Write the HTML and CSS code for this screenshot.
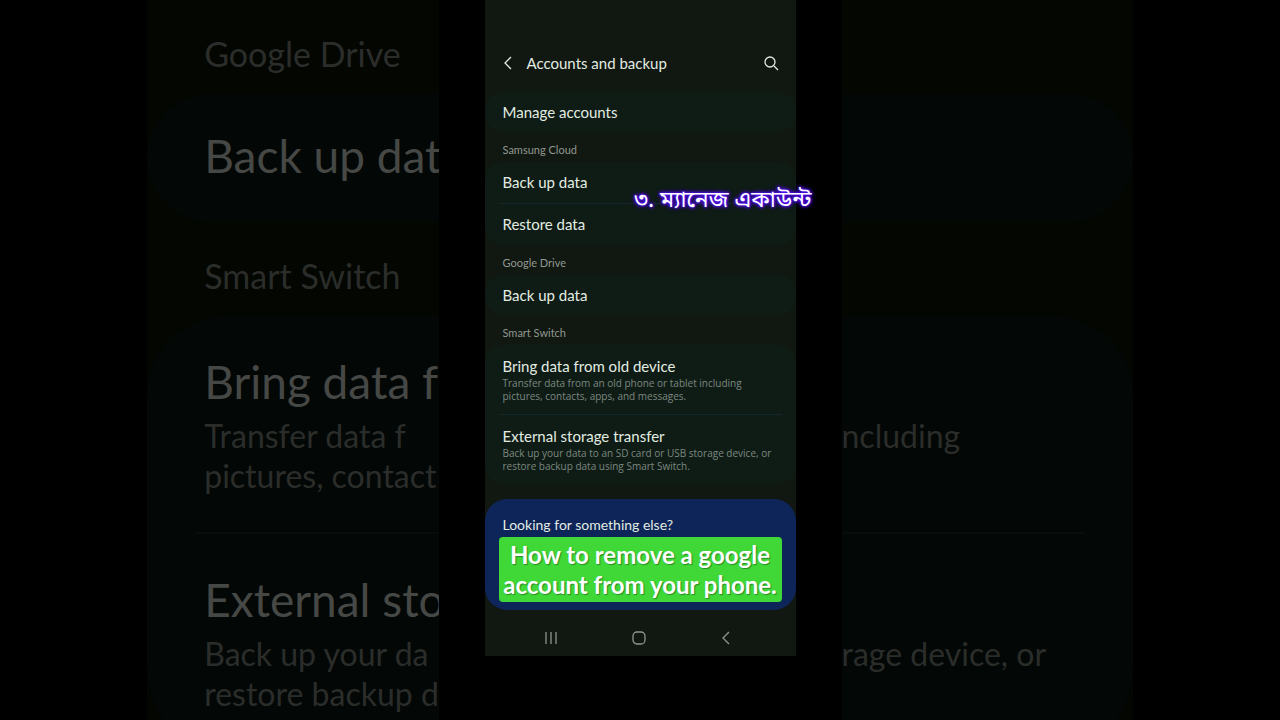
FILE: index.html
```html
<!DOCTYPE html>
<html lang="en">
<head>
    <meta charset="UTF-8">
    <meta name="viewport" content="width=device-width, initial-scale=1.0">
    <title>Accounts and backup</title>
    <link rel="stylesheet" href="styles.css">
</head>
<body>
    <div class="screen">
        <!-- enlarged, dimmed list on the left of the phone -->
        <div class="side side-left" aria-hidden="true">
            <div class="side-label">Google Drive</div>
            <div class="side-card">
                <div class="side-row side-single"><div class="side-title">Back up dat</div></div>
            </div>
            <div class="side-label">Smart Switch</div>
            <div class="side-card">
                <div class="side-row">
                    <div class="side-title">Bring data f</div>
                    <div class="side-desc">Transfer data f<br>pictures, contact</div>
                </div>
                <div class="side-row">
                    <div class="side-title">External sto</div>
                    <div class="side-desc">Back up your da<br>restore backup d</div>
                </div>
            </div>
        </div>

        <div class="stage">
            <main class="phone">
                <header class="header">
                    <button type="button" class="icon-button" aria-label="Back">
                        <svg width="10" height="16" viewBox="0 0 10 16"><path d="M8 2 2 8l6 6"/></svg>
                    </button>
                    <h1>Accounts and backup</h1>
                    <button type="button" class="icon-button" aria-label="Search">
                        <svg width="16" height="16" viewBox="0 0 16 16"><circle cx="7" cy="7" r="5"/><path d="m11 11 4 4"/></svg>
                    </button>
                </header>

                <section class="card">
                    <a class="row" href="#">Manage accounts</a>
                </section>

                <h2>Samsung Cloud</h2>
                <section class="card">
                    <a class="row row-tall" href="#">Back up data</a>
                    <a class="row row-tall" href="#">Restore data</a>
                </section>

                <h2>Google Drive</h2>
                <section class="card">
                    <a class="row" href="#">Back up data</a>
                </section>

                <h2>Smart Switch</h2>
                <section class="card">
                    <a class="row row-detail" href="#">
                        Bring data from old device
                        <span class="desc">Transfer data from an old phone or tablet including<br>pictures, contacts, apps, and messages.</span>
                    </a>
                    <a class="row row-detail" href="#">
                        External storage transfer
                        <span class="desc">Back up your data to an SD card or USB storage device, or<br>restore backup data using Smart Switch.</span>
                    </a>
                </section>

                <section class="suggest">
                    <h3>Looking for something else?</h3>
                    <p class="caption">How to remove a google<br>account from your phone.</p>
                </section>

                <nav class="navbar">
                    <button type="button" class="icon-button" aria-label="Recent apps">
                        <svg width="16" height="16" viewBox="0 0 16 16"><path d="M2 2v12M7 2v12M12 2v12"/></svg>
                    </button>
                    <button type="button" class="icon-button" aria-label="Home">
                        <svg width="16" height="16" viewBox="0 0 16 16"><rect x="1" y="2" width="12" height="12" rx="4"/></svg>
                    </button>
                    <button type="button" class="icon-button" aria-label="Back">
                        <svg width="16" height="16" viewBox="0 0 16 16"><path d="M9 2 3 8l6 6"/></svg>
                    </button>
                </nav>

                <p class="step" lang="bn">৩. ম্যানেজ একাউন্ট</p>
            </main>
        </div>

        <!-- right end of the same list -->
        <div class="side side-right" aria-hidden="true">
            <div class="side-label"></div>
            <div class="side-card">
                <div class="side-row side-single"><div class="side-title"></div></div>
            </div>
            <div class="side-label"></div>
            <div class="side-card">
                <div class="side-row">
                    <div class="side-title"></div>
                    <div class="side-desc">ncluding</div>
                </div>
                <div class="side-row">
                    <div class="side-title"></div>
                    <div class="side-desc">rage device, or</div>
                </div>
            </div>
        </div>
    </div>
</body>
</html>
```
FILE: styles.css
```css
* {
    box-sizing: border-box;
}
body {
    margin: 0;
    background-color: #000;
    font-family: Lato, "Noto Sans", sans-serif;
}
h1, h2, h3, p {
    margin: 0;
    font-weight: 400;
}
.screen {
    display: grid;
    grid-template-columns: 1fr 403px 1fr;
    width: 77%;
    height: 100vh;
    margin: 0 auto;
}

/* list on both sides */
.side {
    height: 100vh;
    overflow: hidden;
    background-color: #040602;
    color: #2b2d2a;
    white-space: nowrap;
}
.side-label {
    height: 94px;
    padding: 16px 57px 0;
    font-size: 34px;
    line-height: 76px;
}
.side-card {
    background-color: #030706;
}
.side-left .side-card {
    border-radius: 80px 0 0 80px;
}
.side-right .side-card {
    border-radius: 0 80px 80px 0;
}
.side-left .side-row {
    margin-left: 48px;
    padding-left: 9px;
}
.side-right .side-row {
    margin-right: 48px;
}
.side-row {
    padding-top: 34px;
    padding-bottom: 36px;
}
.side-row + .side-row {
    border-top: 2px solid #080c0d;
}
.side-single {
    padding-top: 30px;
    padding-bottom: 32px;
}
.side-title {
    height: 66px;
    font-size: 46px;
    line-height: 64px;
    color: #464845;
}
.side-desc {
    height: 80px;
    font-size: 32px;
    line-height: 40px;
}

/* phone */
.stage {
    height: 100vh;
    padding: 0 46px;
    z-index: 1;
}
.phone {
    position: relative;
    background-color: #111711;
    color: #e2ece2;
    white-space: nowrap;
}
.header {
    display: flex;
    align-items: center;
    gap: 14px;
    padding: 42px 17px 8px 18px;
    height: 92px;
}
.header h1 {
    flex: 1;
    font-size: 15px;
}
.icon-button {
    display: flex;
    justify-content: center;
    align-items: center;
    padding: 0;
    border: none;
    background: none;
    color: inherit;
    cursor: pointer;
}
.icon-button svg {
    fill: none;
    stroke: currentColor;
    stroke-width: 1.3;
}
.card {
    background-color: #0f1c15;
    border-radius: 18px;
}
.row {
    display: block;
    margin: 0 14px;
    padding: 0 4px;
    font-size: 15px;
    line-height: 40px;
    color: inherit;
    text-decoration: none;
}
.row-tall {
    line-height: 41px;
}
.row-detail {
    padding: 11px 4px;
    line-height: 21px;
}
.row + .row {
    border-top: 1px solid #14272b;
}
.desc {
    display: block;
    font-family: "Open Sans", "Noto Sans", sans-serif;
    font-size: 10px;
    line-height: 13px;
    color: #7c8880;
}
.phone h2 {
    height: 30px;
    padding: 6px 18px 0;
    font-size: 11px;
    line-height: 24px;
    color: #909890;
}
.suggest {
    margin-top: 15px;
    padding: 14px 14px 8px;
    background-color: #0e2559;
    border-radius: 22px;
}
.suggest h3 {
    padding: 0 4px;
    font-size: 14px;
    line-height: 24px;
}
.caption {
    border-radius: 4px;
    background-color: #3fd837;
    color: #fff;
    font-size: 24px;
    font-weight: 700;
    line-height: 30px;
    padding: 3px 0 2px;
    text-align: center;
    text-shadow: 1px 1px 1px #2a8a26;
}
.navbar {
    display: grid;
    grid-template-columns: repeat(3, 1fr);
    height: 46px;
    padding: 10px 24px 0;
    color: #8f958f;
}

/* step text over the phone edge */
.step {
    position: absolute;
    top: 180px;
    right: -16px;
    font-family: "Noto Sans", "Noto Sans Bengali", sans-serif;
    font-size: 23px;
    line-height: 36px;
    color: #fff;
    text-shadow: 0 0 2px #5a12ff, 0 0 3px #5a12ff, 0 0 4px #4a08e0, 0 0 5px #4a08e0;
}
```
